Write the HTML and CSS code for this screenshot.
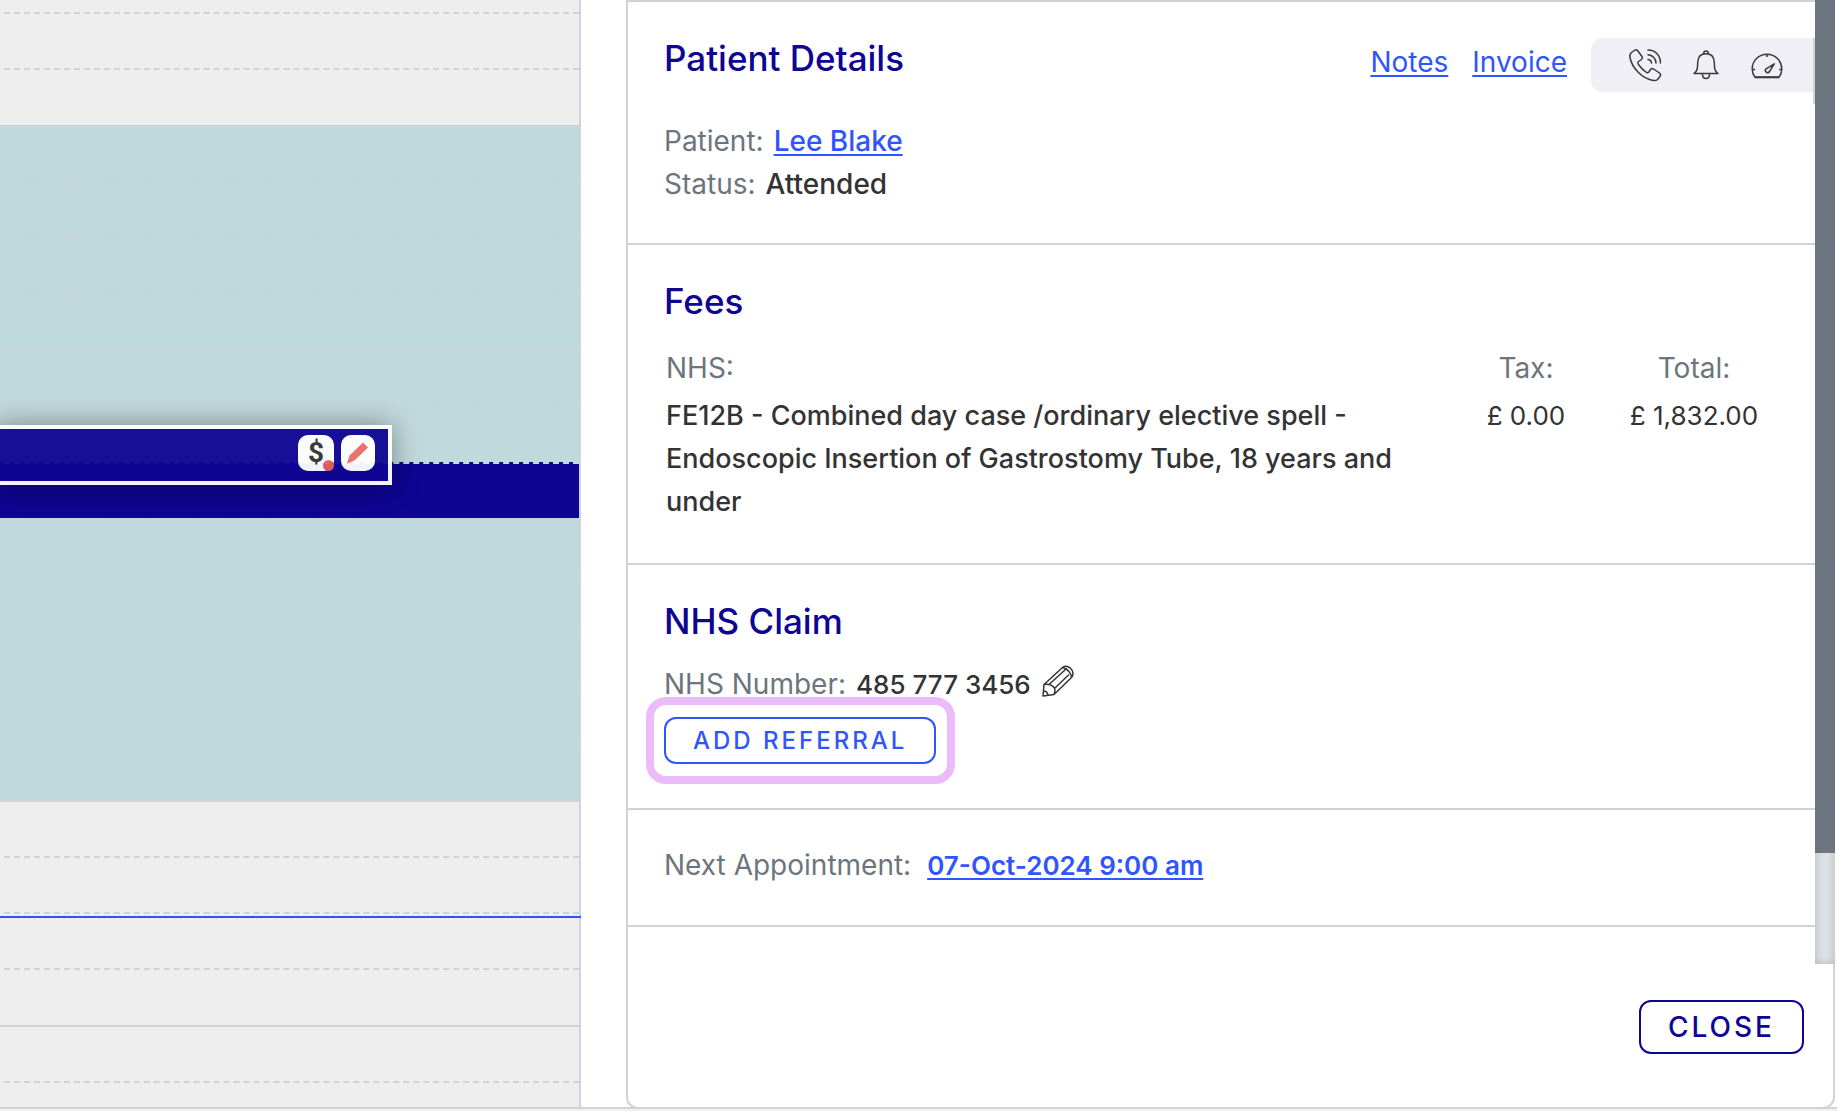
FILE: index.html
```html
<!DOCTYPE html>
<html lang="en">
<head>
<meta charset="utf-8">
<meta name="viewport" content="width=device-width, initial-scale=1">
<title>Appointment</title>
<link rel="stylesheet" href="styles.css">
</head>
<body>
<main class="workspace">
  <section class="calendar" aria-label="Day schedule">
    <div class="calendar-grid">
      <div class="slot slot-partial"></div>
      <div class="slot"></div>
      <div class="slot slot-last"></div>
      <div class="slot slot-hour slot-open"></div>
      <div class="slot slot-open"></div>
      <div class="slot slot-open"></div>
      <div class="slot slot-open slot-last"></div>
      <div class="slot slot-hour slot-open"></div>
      <div class="slot slot-open"></div>
      <div class="slot slot-open slot-booked">
        <div class="event">
          <button class="event-action event-payment" type="button" aria-label="Payment due">
            <span class="dollar">$</span><span class="dot"></span>
          </button>
          <button class="event-action" type="button" aria-label="Edit appointment">
            <svg width="24" height="24" viewBox="0 0 24 24" aria-hidden="true"><path fill="#eb6e6b" d="M1.500 22.500Q1 23 1.200 22L3.500 14.500L17 1.500L22 6.500L8.500 19.500Z"/></svg>
          </button>
        </div>
      </div>
      <div class="slot slot-open slot-last"></div>
      <div class="slot slot-hour slot-open"></div>
      <div class="slot slot-open"></div>
      <div class="slot slot-open"></div>
      <div class="slot slot-open slot-last"></div>
      <div class="slot slot-hour"></div>
      <div class="slot"></div>
      <div class="slot slot-now"></div>
      <div class="slot slot-last"></div>
      <div class="slot slot-hour"></div>
      <div class="slot slot-fill"></div>
    </div>
  </section>

  <section class="panel" aria-label="Appointment details">
    <div class="panel-body">
      <div class="panel-content">
        <section class="block">
          <header class="block-header">
            <h2>Patient Details</h2>
            <nav class="links">
              <a href="#notes">Notes</a>
              <a href="#invoice">Invoice</a>
            </nav>
            <div class="toolbar">
              <button class="tool" type="button" aria-label="Call patient">
                <svg width="36" height="36" viewBox="0 0 36 36" fill="none" stroke="#3a3a3a" stroke-width="1.500" stroke-linecap="round" stroke-linejoin="round" aria-hidden="true"><path d="M4.500 5.500L8 3Q9.500 2.300 10.500 3.500L15 9.500Q16 11 14.500 12.500L11.500 14.500Q10.300 15.500 11.300 17.200Q15 22.500 19.500 25.500Q20.800 26.300 21.800 25L23.500 22.500Q24.800 21 26.500 22L32.500 26Q34.300 27.500 33 29.500L30.500 32.500Q29 33.800 26.500 33.500C15 31.500 5 21 3 10.500Q2.500 7 4.500 5.500Z"/><path d="M21 3C28.500 3 33.500 8.500 33.500 16M21 7.800C25.500 8 28.800 11.500 29 16M21 12.500Q24.200 12.800 24.500 16"/></svg>
              </button>
              <button class="tool" type="button" aria-label="Reminders">
                <svg width="36" height="36" viewBox="0 0 36 36" fill="none" stroke="#3a3a3a" stroke-width="1.500" stroke-linejoin="round" aria-hidden="true"><path d="M6 26.500C9.500 24 9.500 22 9.700 15.500C9.900 10 12.500 6.800 18 6.800S26.100 10 26.300 15.500C26.500 22 26.500 24 30 26.500ZM15.800 7V6Q15.800 4 18 4T20.200 6V7M14.500 26.500V28Q14.700 31.500 18 31.500T21.500 28V26.500"/></svg>
              </button>
              <button class="tool" type="button" aria-label="Activity">
                <svg width="36" height="36" viewBox="0 0 36 36" fill="none" stroke="#3a3a3a" stroke-width="1.500" stroke-linejoin="round" aria-hidden="true"><path d="M6 30.300Q3.200 26.500 3.200 22A14.800 14.800 0 0 1 32.800 22Q32.800 26.500 30 30.300ZM18 7.500V10M3.500 22.500H6M30 22.500H32.500M25.300 16.800L20.500 24.500A2.200 2.200 0 0 1 16.700 22.200Z"/><path stroke-width="2" d="M6 30.300H30"/></svg>
              </button>
            </div>
          </header>
          <p class="line"><span class="label">Patient:</span><a class="value" href="#patient">Lee Blake</a></p>
          <p class="line"><span class="label">Status:</span><span class="value">Attended</span></p>
        </section>

        <section class="block">
          <h2>Fees</h2>
          <table class="fees">
            <thead>
              <tr><th scope="col">NHS:</th><th class="money" scope="col">Tax:</th><th class="money" scope="col">Total:</th></tr>
            </thead>
            <tbody>
              <tr><td>FE12B - Combined day case /ordinary elective spell - Endoscopic Insertion of Gastrostomy Tube, 18 years and under</td><td class="money">£ 0.00</td><td class="money">£ 1,832.00</td></tr>
            </tbody>
          </table>
        </section>

        <section class="block">
          <h2>NHS Claim</h2>
          <p class="line">
            <span class="label">NHS Number:</span><span class="value figures">485 777 3456</span>
            <button class="edit" type="button" aria-label="Edit NHS number">
              <svg width="34" height="34" viewBox="0 0 34 34" fill="none" stroke="#33343c" stroke-width="1.500" stroke-linejoin="round" aria-hidden="true"><path d="M2 32L3 20.500L21.500 3.500Q25 .800 29.500 4.200Q34 8.500 30.500 13.500L13 30.500ZM3 20.500Q10 19.500 13.500 24Q14.500 27 13 30.500M8 20.500L24.500 5.500M13.500 24.500L28 10.500M21.500 3.500Q26 4.500 28 7.500Q30.500 10.500 30.500 13.500M2.500 27Q6.500 27 7 31.500"/></svg>
            </button>
          </p>
          <button class="button button-add" type="button">ADD REFERRAL</button>
        </section>

        <section class="block block-slim">
          <p class="line line-wide"><span class="label">Next Appointment:</span><a class="value value-strong figures" href="#next">07-Oct-2024 9:00 am</a></p>
        </section>
      </div>
      <div class="scrollbar" aria-hidden="true"><div class="scrollbar-thumb"></div></div>
    </div>
    <footer class="panel-footer">
      <button class="button button-close" type="button">CLOSE</button>
    </footer>
  </section>
</main>
<div class="page-edge"></div>
</body>
</html>
```
FILE: styles.css
```css
* { box-sizing: border-box; }

body {
  margin: 0;
  min-height: 100vh;
  display: flex;
  flex-direction: column;
  font-family: Inter, "Liberation Sans", sans-serif;
  font-size: 28px;
  line-height: 43px;
  color: #333;
  background: #fff;
}

h2, p { margin: 0; }

button {
  font: inherit;
  padding: 0;
  border: 0;
  background: none;
  cursor: pointer;
}

svg { display: block; }

a {
  color: #2f55ff;
  text-decoration-thickness: 2px;
  text-underline-offset: 3px;
  text-decoration-skip-ink: none;
}

.workspace {
  flex: 1;
  display: grid;
  grid-template-columns: minmax(0, 581fr) minmax(0, 1256fr);
}

.page-edge {
  height: 4px;
  border-top: 2px solid #ced4da;
  background: #f0f0f5;
}

/* Schedule */
.calendar {
  display: flex;
  overflow: hidden;
  background: #eee;
}

.calendar-grid {
  flex: 1;
  display: flex;
  flex-direction: column;
  margin-left: -6px;
  border-right: 2px solid #ced4da;
}

.slot {
  position: relative;
  height: 56px;
  border-top: 2px dashed #ced4da;
}

.slot-partial { height: 12px; border-top: 0; }
.slot-last { height: 57px; }
.slot-hour { border-top-style: solid; }
.slot-fill { flex: 1; height: auto; }

.slot-open {
  background: #c0d9dd;
  border-top-color: #cbd3da;
}

.slot-booked {
  background: #0e0592;
  border-top-color: #c5dade;
}

.slot-now::after {
  content: "";
  position: absolute;
  top: 2px;
  left: 0;
  right: -2px;
  height: 2px;
  background: #2f55ff;
}

.event {
  position: absolute;
  z-index: 1;
  top: -39px;
  left: 0;
  right: 187px;
  height: 60px;
  display: flex;
  justify-content: flex-end;
  align-items: flex-start;
  gap: 7px;
  padding: 6px 13px 0 0;
  border: 4px solid #fff;
  background: #0e0592;
  box-shadow: 0 0 28px rgba(0, 0, 0, .4);
  opacity: .95;
}

.event-action {
  position: relative;
  display: flex;
  align-items: center;
  justify-content: center;
  width: 34px;
  height: 36px;
  border-radius: 10px;
  background: #fff;
}

.event-payment { width: 36px; }

.dollar {
  font: bold 28px/36px Roboto, sans-serif;
  color: #333;
}

.dot {
  position: absolute;
  right: 0;
  bottom: 0;
  width: 11px;
  height: 11px;
  border-radius: 50%;
  background: #e5605f;
}

/* Details panel */
.panel {
  display: flex;
  flex-direction: column;
  margin: 0 2px -2px 45px;
  border: 2px solid #ced4da;
  border-radius: 0 0 12px 12px;
}

.panel-body {
  flex: 1;
  display: flex;
  margin: -2px -2px 0 0;
}

.panel-content {
  flex: 1;
  padding-top: 2px;
}

.scrollbar {
  width: 20px;
  background: #dee2e6;
  box-shadow: inset 0 0 10px rgba(0, 0, 0, .2);
}

.scrollbar-thumb {
  height: calc(100% - 111px);
  background: #6c757d;
}

.block {
  padding: 36px 36px 37px;
  border-bottom: 2px solid #ced4da;
}

.block-slim { padding: 34px 36px 38px; }

h2 {
  font-size: 35px;
  line-height: 40px;
  font-weight: 500;
  color: #0e0592;
  margin-bottom: 22px;
}

.block-header {
  display: flex;
  align-items: flex-start;
  margin: 0 -36px 28px 0;
}

.block-header h2 { margin: 0 auto 0 0; }

.links {
  display: flex;
  gap: 24px;
  margin-right: 24px;
  line-height: 48px;
}

.toolbar {
  position: relative;
  display: flex;
  align-items: center;
  gap: 25px;
  height: 54px;
  padding: 0 30px 0 36px;
  border-radius: 12px 0 0 12px;
  background: #f0eff5;
}

.toolbar::after {
  content: "";
  position: absolute;
  top: 0;
  right: 0;
  width: 2px;
  height: 66px;
  background: #ced4da;
}

.line {
  display: flex;
  gap: 10px;
}

.line-wide { gap: 16px; }

.label { color: #6c757d; }
.value { font-weight: 500; }
.value-strong { font-weight: 600; }
.figures { font-size: 26px; }

.edit {
  display: flex;
  align-items: center;
  height: 36px;
}

.fees {
  width: 100%;
  margin: 24px 0 1px;
  table-layout: fixed;
  border-spacing: 2px;
}

.fees th, .fees td {
  padding: 0;
  text-align: left;
  vertical-align: top;
}

.fees th {
  padding-bottom: 2px;
  font-weight: 400;
  color: #6c757d;
}

.fees td { font-size: 27px; font-weight: 500; }
.fees .money { width: 15%; text-align: center; }
.fees td.money { font-size: 26px; font-weight: 400; }

.button {
  border: 2px solid;
  border-radius: 12px;
  font-weight: 500;
}

.button-add {
  position: relative;
  display: block;
  height: 47px;
  margin: 11px 0 7px;
  padding: 0 27px;
  font-size: 24px;
  letter-spacing: 3px;
  color: #2f55ff;
}

.button-add::after {
  content: "";
  position: absolute;
  inset: -22px -21px -22px -20px;
  border: 8px solid #ecbbf9;
  border-radius: 20px;
}

.panel-footer {
  display: flex;
  justify-content: flex-end;
  padding: 36px 29px 53px;
}

.button-close {
  height: 54px;
  padding: 0 27px;
  letter-spacing: 3px;
  color: #0e0592;
}
```
